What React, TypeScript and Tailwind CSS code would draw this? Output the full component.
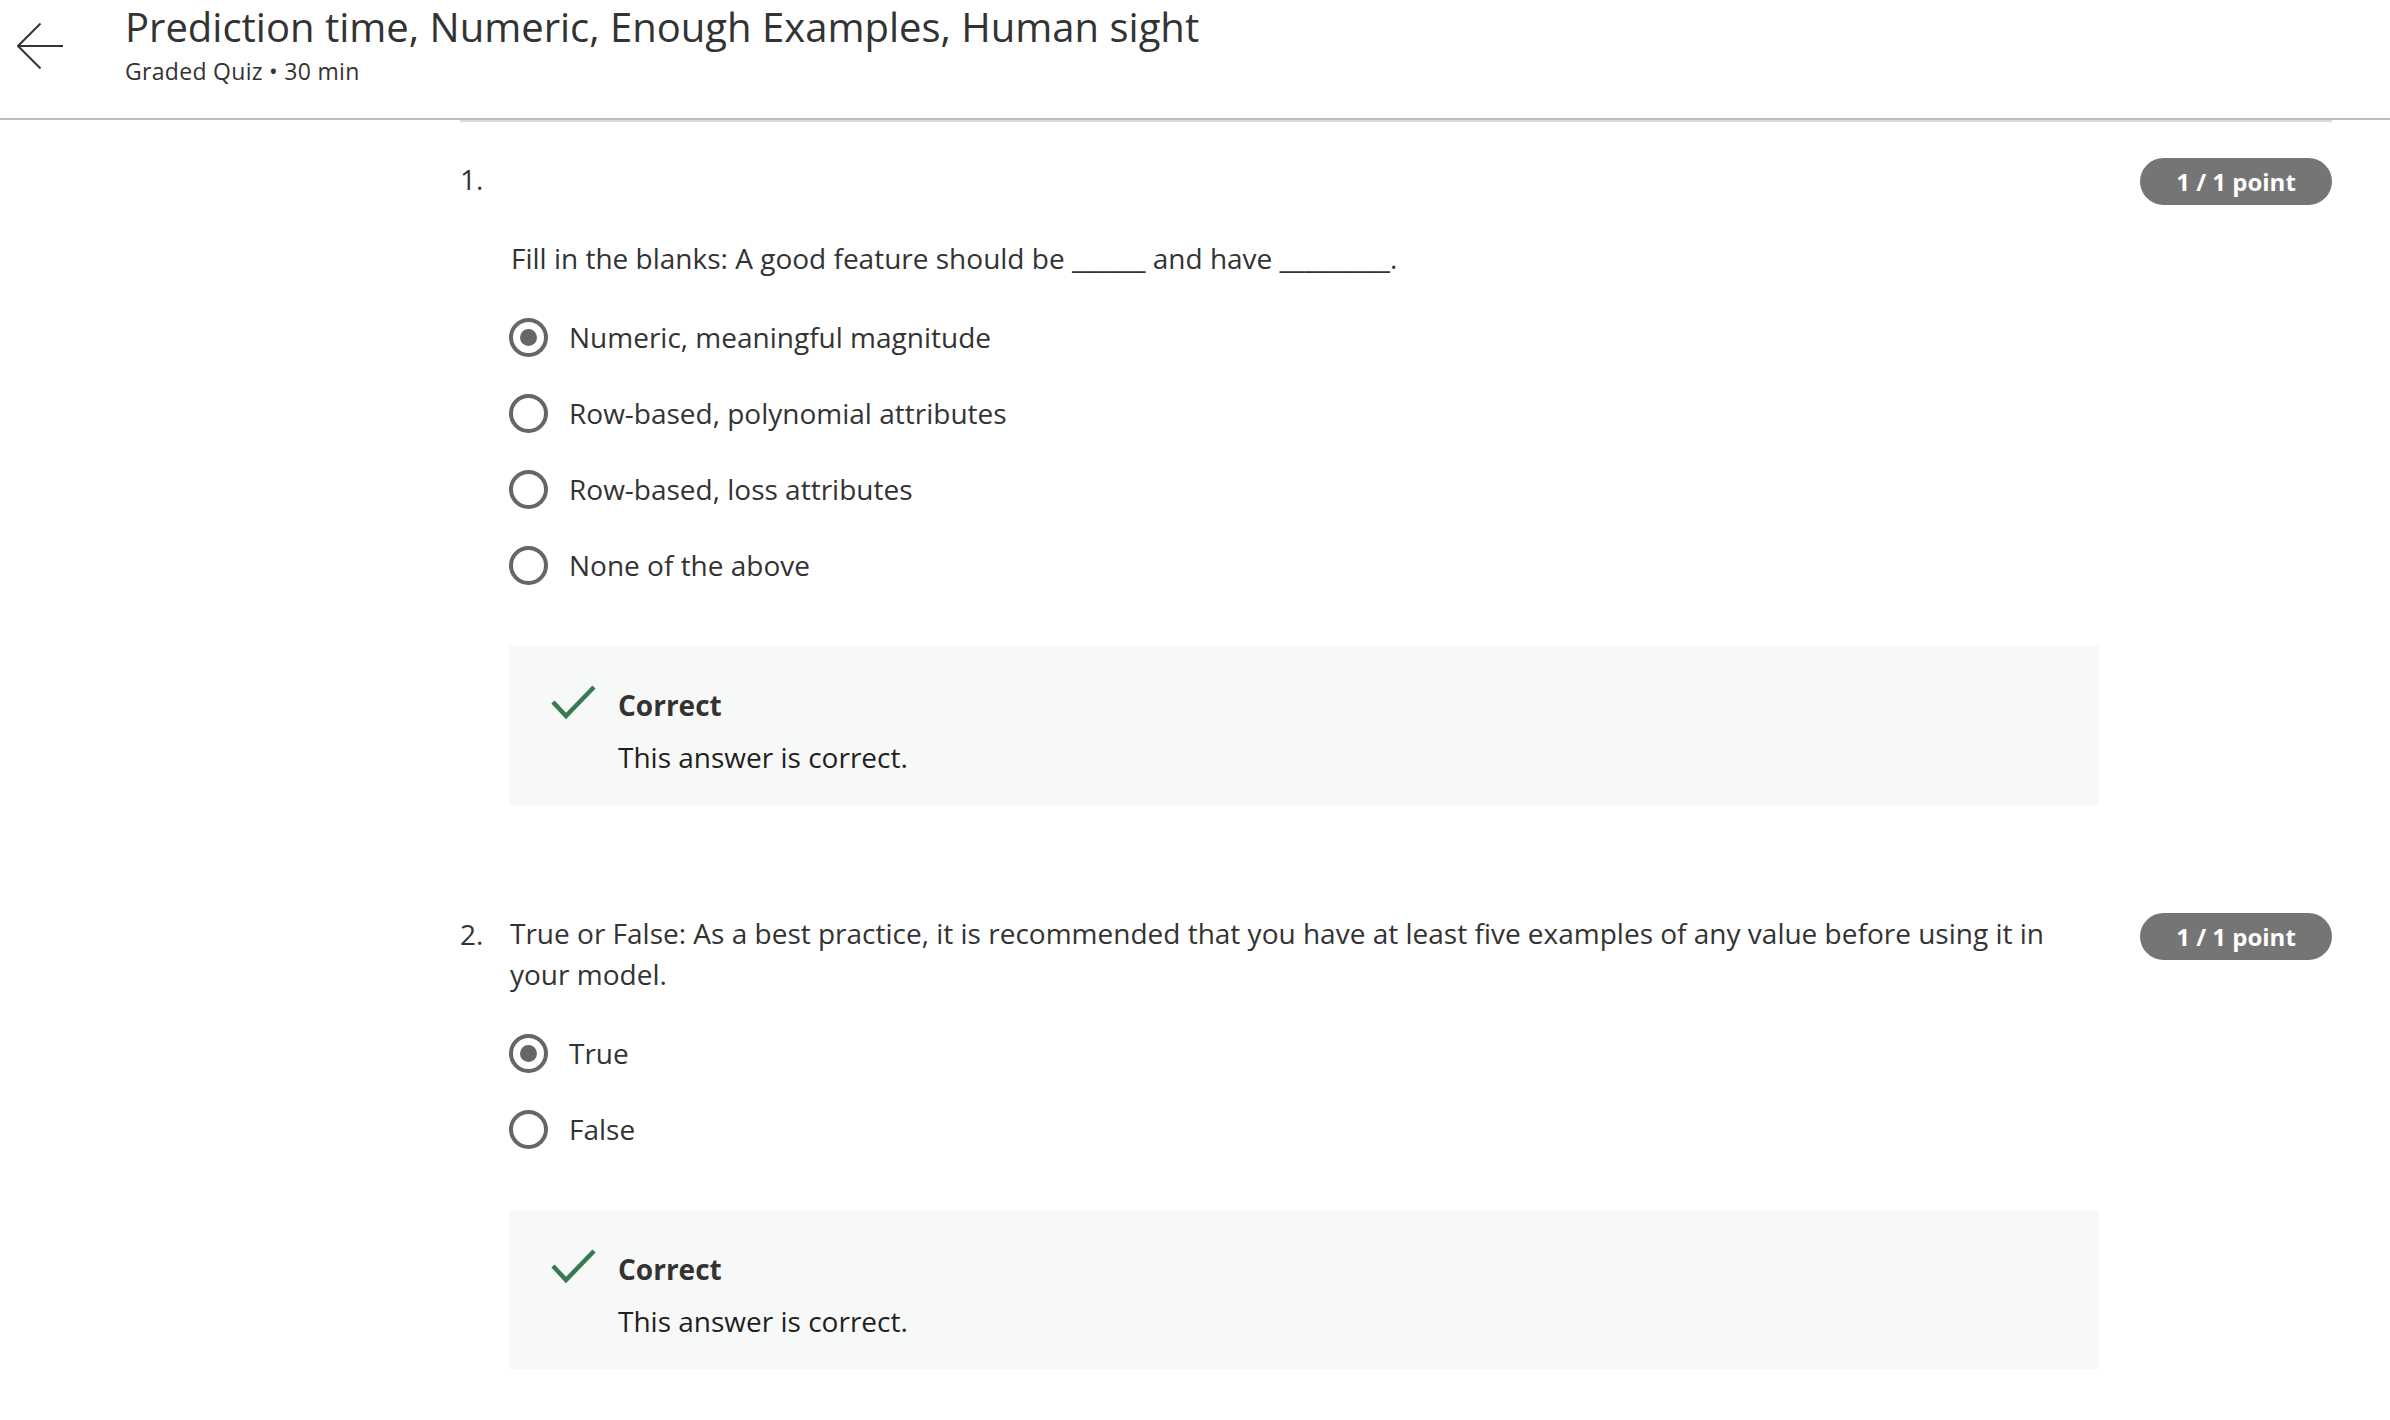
import React from "react";

type Question = {
  num: string;
  prompt: string;
  inline: boolean;
  options: string[];
  selected: number;
};

const questions: Question[] = [
  {
    num: "1.",
    prompt: "Fill in the blanks: A good feature should be ______ and have _________.",
    inline: false,
    options: [
      "Numeric, meaningful magnitude",
      "Row-based, polynomial attributes",
      "Row-based, loss attributes",
      "None of the above",
    ],
    selected: 0,
  },
  {
    num: "2.",
    prompt:
      "True or False: As a best practice, it is recommended that you have at least five examples of any value before using it in your model.",
    inline: true,
    options: ["True", "False"],
    selected: 0,
  },
];

const BackArrow = () => (
  <svg width="46" height="46" viewBox="0 0 46 46" fill="none" className="mt-[23px] shrink-0">
    <path d="M1 23 H46 M23.5 0.5 L1 23 L23.5 45.5" stroke="#333333" strokeWidth="2" />
  </svg>
);

const Check = () => (
  <svg width="46" height="36" viewBox="0 0 46 36" fill="none" className="mt-[-1px] shrink-0">
    <polyline points="2,18 15,32 43,3" stroke="#387a53" strokeWidth="4.5" />
  </svg>
);

const Radio = ({ checked }: { checked: boolean }) => (
  <span className="w-[39px] h-[39px] rounded-full border-4 border-[#666666] flex items-center justify-center shrink-0">
    {checked && <span className="w-[17px] h-[17px] rounded-full bg-[#666666]" />}
  </span>
);

const Feedback = () => (
  <div className="mt-[43px] bg-[#f7f9f8] pl-[42px] pt-[39px] pb-[27px] flex items-start">
    <Check />
    <div className="ml-[21px] leading-[41px]">
      <div className="font-bold text-[#333333]">Correct</div>
      <div className="mt-[11px] text-[#1f1f1f]">This answer is correct.</div>
    </div>
  </div>
);

const QuestionBlock = ({ q, first }: { q: Question; first: boolean }) => (
  <div className={first ? "" : "mt-[108px]"}>
    <div className="flex items-start">
      <div className="w-[49px] shrink-0 leading-[41px] mt-[1px]">{q.num}</div>
      <div className="w-[1590px] shrink-0">
        {q.inline ? (
          <p className="leading-[41px] pl-[1px]">{q.prompt}</p>
        ) : (
          <>
            <div className="h-[41px]" />
            <p className="mt-[39px] leading-[41px] pl-[2px]">{q.prompt}</p>
          </>
        )}
        <div className="mt-[20px] flex flex-col">
          {q.options.map((opt, i) => (
            <label key={opt} className="h-[76px] flex items-center gap-[21px]">
              <Radio checked={i === q.selected} />
              <span>{opt}</span>
            </label>
          ))}
        </div>
        <Feedback />
      </div>
      <div className="ml-auto w-[192px] h-[47px] rounded-full bg-[#757575] text-white font-bold text-[24px] flex items-center justify-center">
        1 / 1 point
      </div>
    </div>
  </div>
);

export default function App() {
  return (
    <div className="min-h-screen bg-white text-[#333333] font-['Open_Sans',sans-serif]">
      <header className="h-[120px] border-b-2 border-[#bdbdbd] flex items-start pl-[17px]">
        <BackArrow />
        <div className="ml-[62px]">
          <h1 className="text-[40px] leading-[53px] font-normal text-[#333333]">
            Prediction time, Numeric, Enough Examples, Human sight
          </h1>
          <div className="mt-[3px] text-[23px] leading-[30px] tracking-[0.3px] text-[#333333]">
            Graded Quiz • 30 min
          </div>
        </div>
      </header>
      <main className="ml-[460px] w-[1872px] border-t-2 border-[#dadada] pt-[36px] text-[28px] pb-[40px]">
        {questions.map((q, i) => (
          <QuestionBlock key={q.num} q={q} first={i === 0} />
        ))}
      </main>
    </div>
  );
}
